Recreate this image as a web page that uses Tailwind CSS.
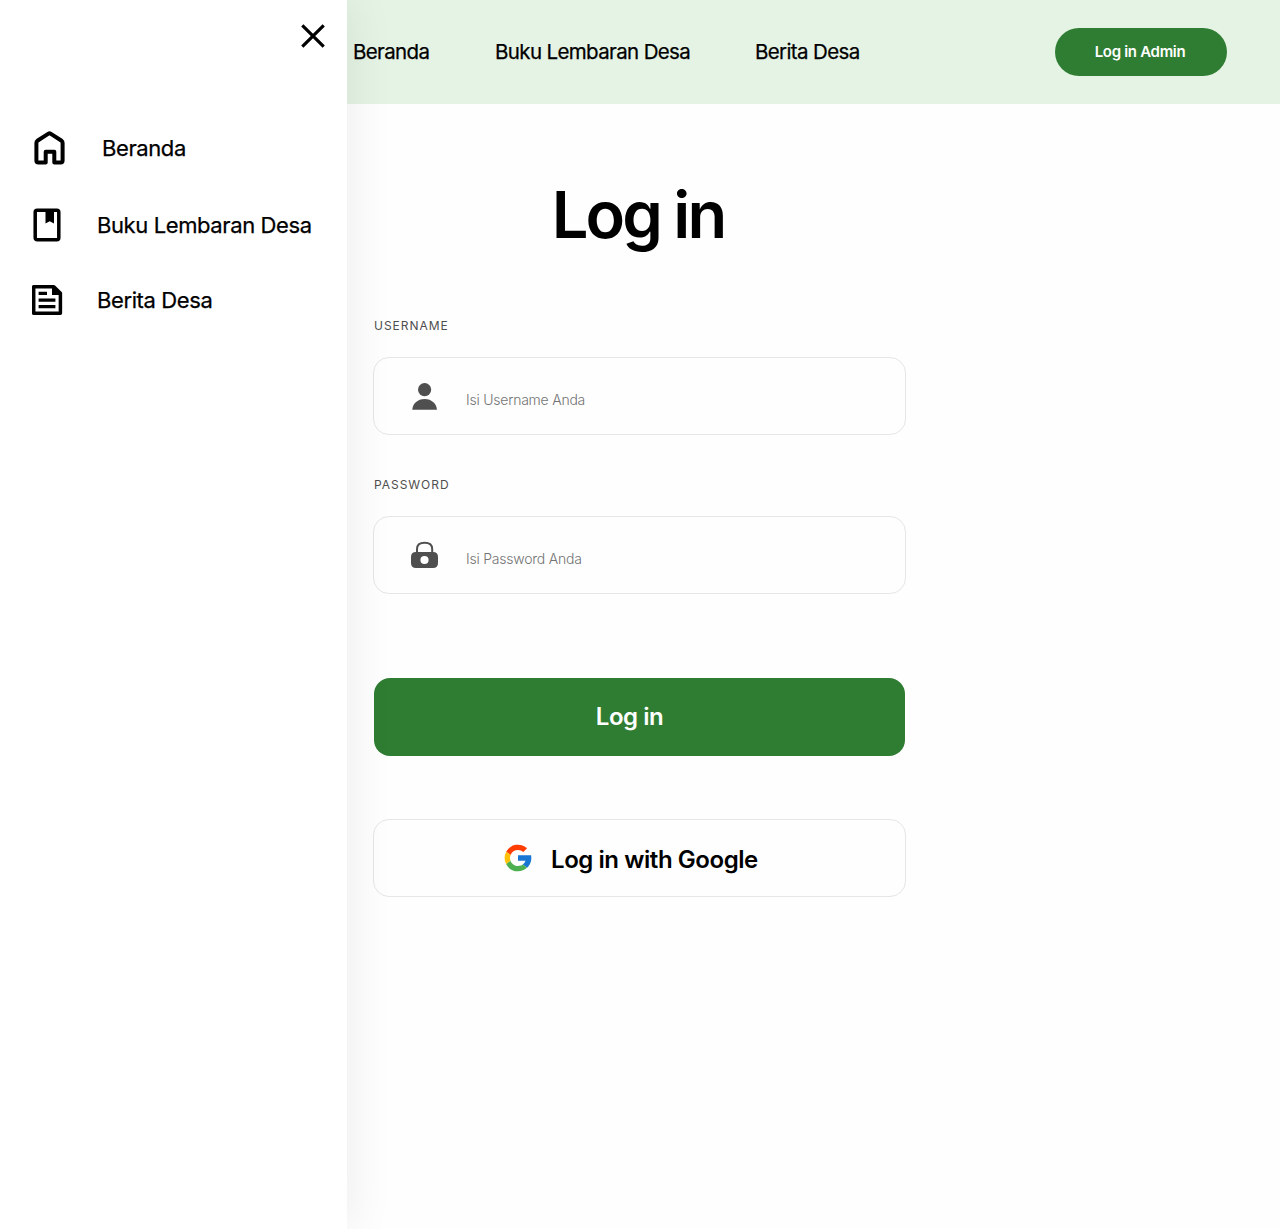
<!DOCTYPE html>
<html lang="id">
<head>
<meta charset="utf-8">
<title>Log in</title>
<script src="https://cdn.jsdelivr.net/npm/@tailwindcss/browser@4"></script>
</head>
<body class="relative h-[1229px] w-[1280px] overflow-hidden bg-[#fefefe] font-['Inter',sans-serif] text-black">
<header class="flex h-[104px] items-center bg-[#e5f3e5] pr-[53px] pl-[353px]">
  <nav class="flex flex-1 text-[20.5px] whitespace-nowrap tracking-[-0.031em] font-normal [-webkit-text-stroke:0.25px_#000]">
    <a class="w-[142px]">Beranda</a>
    <a class="w-[260px]">Buku Lembaran Desa</a>
    <a>Berita Desa</a>
  </nav>
  <button class="h-12 w-[172px] rounded-3xl bg-[#2f7d32] pr-0.5 text-[15px] font-semibold tracking-[-0.02em] text-white">Log in Admin</button>
</header>
<main class="ml-[373px] w-[533px]">
  <h1 class="pt-[71px] pr-[3px] text-center text-[65px] leading-[80px] font-semibold tracking-[-0.045em]">Log in</h1>
  <label class="mt-[63px] block pl-px text-xs leading-4 tracking-[0.08em] text-[#4f4f4f]">USERNAME</label>
  <div class="mt-[23px] flex h-[78px] items-center rounded-[16px] border border-[#e6e6e6] pl-[37px]">
    <svg class="h-8 w-7" viewBox="0 0 28 32" fill="#4f4f4f"><circle cx="13.6" cy="9.7" r="6.6"/><path d="M1.3 29.8C1.3 24 6.5 19 13.6 19S25.9 24 25.9 29.8Z"/></svg>
    <span class="pt-[7px] pl-[27px] text-sm font-light tracking-[-0.016em] text-[#737373]">Isi Username Anda</span>
  </div>
  <label class="mt-[42px] block pl-px text-xs leading-4 tracking-[0.08em] text-[#4f4f4f]">PASSWORD</label>
  <div class="mt-[23px] flex h-[78px] items-center rounded-[16px] border border-[#e6e6e6] pl-[37px]">
    <svg class="h-8 w-7" viewBox="0 0 28 32" fill="#4f4f4f"><path d="M6 14V10C6 5.700 9.200 3.700 13.600 3.700S21.200 5.700 21.200 10V14" fill="none" stroke="#4f4f4f" stroke-width="2"/><path fill-rule="evenodd" d="M5 13H22Q27 13 27 18V24Q27 29 22 29H5Q0 29 0 24V18Q0 13 5 13ZM13.5 16.9a4.1 4.1 0 1 0 0 8.2a4.1 4.1 0 0 0 0-8.2Z"/></svg>
    <span class="pt-[7px] pl-[27px] text-sm font-light tracking-[-0.016em] text-[#737373]">Isi Password Anda</span>
  </div>
  <button class="mt-[84px] ml-px block h-[77.500px] w-[531px] rounded-[16px] bg-[#2f7d32] pr-5 text-2xl font-semibold tracking-[-0.02em] text-white">Log in</button>
  <button class="mt-[63.500px] flex h-[78px] w-full items-center rounded-[16px] border border-[#e6e6e6] pl-[128px]">
    <svg class="h-8 w-8" viewBox="0 0 48 48"><path fill="#1976d2" d="M43.6 20H24v8h11.3a12 12 0 0 1-4.1 5.6l6.2 5.2C37 39.200 44 34 44 24c0-1.300-.1-2.600-.4-4Z"/><path fill="#ff3d00" d="m6.300 14.700 6.600 4.800A12 12 0 0 1 24 12c3 0 5.800 1.200 8 3l5.600-5.700A20 20 0 0 0 6.300 14.700Z"/><path fill="#4caf50" d="M24 44c5.200 0 9.900-2 13.400-5.200l-6.200-5.200A12 12 0 0 1 12.700 28l-6.500 5A20 20 0 0 0 24 44Z"/><path fill="#ffc107" d="M6.300 14.700A20 20 0 0 0 6.200 33l6.500-5A12 12 0 0 1 12.900 19.500Z"/></svg>
    <span class="pt-1 pl-[17px] text-2xl font-semibold tracking-[-0.018em]">Log in with Google</span>
  </button>
</main>
<aside class="absolute top-0 left-0 h-[1229px] w-[347px] bg-white pt-[20px] shadow-[4px_0_44px_rgba(0,0,0,0.07)]">
  <button class="ml-[297px] block h-8 w-8"><svg viewBox="0 0 32 32" fill="none" stroke="#000" stroke-width="3.2"><path d="M5.300 5.300 26.700 26.700M26.700 5.300 5.300 26.700"/></svg></button>
  <nav class="mt-[76px] text-[22px] font-normal tracking-[-0.018em] whitespace-nowrap [-webkit-text-stroke:0.25px_#000]">
    <a class="flex h-10 items-center pl-[32px]">
      <svg class="h-10 w-9" viewBox="0 0 36 40" fill="none" stroke="#000" stroke-width="4" stroke-linejoin="round"><path d="M5.400 12.800 16.500 5.600Q17.500 5 18.500 5.600L29.600 12.800Q30.600 13.500 30.600 15V32.500Q30.600 34.400 28.700 34.400H22.300V23.700H13.700V34.400H6.300Q4.400 34.400 4.400 32.500V15Q4.400 13.500 5.400 12.800Z"/></svg>
      <span class="pl-[34px]">Beranda</span>
    </a>
    <a class="mt-[38px] flex h-10 items-center pl-[32px]">
      <svg class="h-10 w-9" viewBox="0 0 36 40"><rect x="3.200" y="4.200" width="23.600" height="29.600" rx="2" fill="none" stroke="#000" stroke-width="3.500"/><path d="M13.500 4H22V17.500L17.700 15.200 13.500 17.500Z"/></svg>
      <span class="pb-px pl-[29px]">Buku Lembaran Desa</span>
    </a>
    <a class="mt-[35px] flex h-10 items-center pl-[32px]">
      <svg class="h-10 w-9" viewBox="0 0 36 40"><path d="M3.300 5.700H21.800L28.400 12.300V32.300H1.700V5.700Z" fill="none" stroke="#000" stroke-width="3.500" stroke-linejoin="round"/><path d="M20 5H22L29 12V14H20ZM6.600 10.700H15V14H6.600ZM6.600 17.400H23.400V20.700H6.600ZM6.600 24H23.400V27.300H6.600Z"/></svg>
      <span class="pb-px pl-[29px]">Berita Desa</span>
    </a>
  </nav>
</aside>
</body>
</html>
